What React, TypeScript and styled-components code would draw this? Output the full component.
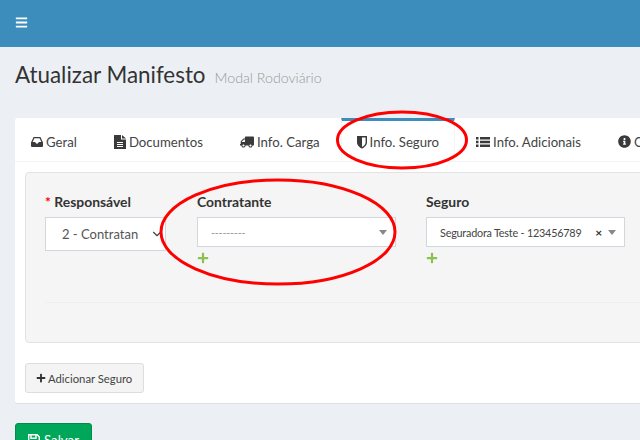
import React, { FC } from 'react'
import styled, { createGlobalStyle } from 'styled-components'
import { FaBars, FaInfoCircle, FaPlus, FaTruck } from 'react-icons/fa'
import { LuChevronDown } from 'react-icons/lu'

const GlobalStyle = createGlobalStyle`
  html, body {
    margin: 0;
    height: 440px;
    overflow: hidden;
    background: #ecf0f5;
  }
  body {
    color: #333;
    font-family: "Lato", "Liberation Sans", sans-serif;
    font-size: 14px;
  }
  * { box-sizing: border-box; }
`

const Page = styled.div`
  position: relative;
  width: 640px;
  height: 440px;
  overflow: hidden;
`

const Header = styled.header`
  align-items: center;
  background: #3c8dbc;
  color: #fff;
  display: flex;
  height: 47px;
  padding: 0 0 3px 15px;
`

const Content = styled.main`
  padding: 0 15px;
  width: 900px;
`

const Title = styled.h1`
  align-items: baseline;
  color: #333;
  display: flex;
  font-size: 22.4px;
  font-weight: 400;
  gap: 9px;
  height: 71px;
  line-height: 26px;
  margin: 0;
  padding-top: 15px;

  small {
    color: #999;
    font-size: 14.2px;
    font-weight: 300;
  }
`

const Box = styled.section`
  background: #fff;
  border-bottom: 1px solid #dde1e6;
  border-radius: 3px;
  height: 286px;
`

const Tabs = styled.ul`
  border-bottom: 1px solid #f4f4f4;
  display: flex;
  gap: 5px;
  height: 44px;
  list-style: none;
  margin: 0;
  padding: 0;
`

const Tab = styled.li<{ $active?: boolean }>`
  align-items: center;
  border-top: 3px solid ${p => (p.$active ? '#3c8dbc' : 'transparent')};
  border-left: 1px solid ${p => (p.$active ? '#f4f4f4' : 'transparent')};
  border-right: 1px solid ${p => (p.$active ? '#f4f4f4' : 'transparent')};
  color: #444;
  display: flex;
  font-size: 13.2px;
  gap: 3px;
  height: 44px;
  padding: 0 15px;
  white-space: nowrap;

  svg {
    color: #3a3a3a;
    flex: none;
  }
`

const TruckIcon = styled(FaTruck)`
  font-size: 14px;
  transform: scaleX(-1);
`

const TabPane = styled.div`
  padding: 10px;
`

const Well = styled.div`
  background: #f5f5f5;
  border: 1px solid #e3e3e3;
  border-radius: 4px;
  height: 171px;
  padding: 19px;
`

const Row = styled.div`
  display: flex;
`

const Field = styled.div<{ $width: number; $gap: number }>`
  margin-right: ${p => p.$gap}px;
  width: ${p => p.$width}px;
`

const Label = styled.label`
  color: #333;
  display: block;
  font-size: 13.9px;
  font-weight: 700;
  height: 25px;
  line-height: 20px;

  span {
    color: #f00;
  }
`

const NativeSelect = styled.div`
  align-items: center;
  background: #fff;
  border: 1px solid #d2d6de;
  color: #555;
  display: flex;
  font-size: 13px;
  height: 34px;
  overflow: hidden;
  padding-left: 16px;
  position: relative;
  white-space: nowrap;

  svg {
    background: #fff;
    color: #444;
    font-size: 14px;
    position: absolute;
    right: 1px;
  }
`

const Select2 = styled.div`
  align-items: center;
  background: #fff;
  border: 1px solid #d2d6de;
  color: #444;
  display: flex;
  font-size: 10.8px;
  height: 30px;
  letter-spacing: -0.2px;
  padding: 0 13px 0 13px;
`

const Selected = styled.span`
  flex: 1;
  white-space: nowrap;
`

const Placeholder = styled(Selected)`
  color: #999;
`

const Clear = styled.span`
  color: #333;
  font-size: 12px;
  font-weight: 700;
  margin-right: 6px;
`

const Arrow = styled.span`
  border-left: 4.5px solid transparent;
  border-right: 4.5px solid transparent;
  border-top: 5px solid #888;
  flex: none;
  margin-right: -5px;
`

const AddLink = styled.a`
  color: #8cc152;
  display: block;
  font-size: 12px;
  height: 12px;
  line-height: 12px;
  margin-top: 5px;
`

const Divider = styled.hr`
  border: 0;
  border-top: 1px solid #eee;
  margin: 38px 0 0;
`

const Button = styled.button`
  align-items: center;
  background: #f4f4f4;
  border: 1px solid #ddd;
  border-radius: 3px;
  color: #444;
  display: flex;
  font-family: inherit;
  font-size: 11.3px;
  gap: 2px;
  height: 30px;
  margin-top: 20px;
  padding: 0 10px;
  white-space: nowrap;
  width: 119px;

  svg {
    color: #333;
    font-size: 10px;
    flex: none;
  }
`

const SaveButton = styled.button`
  align-items: center;
  background: #00a65a;
  border: 1px solid #008d4c;
  border-radius: 3px;
  color: #fff;
  display: flex;
  font-family: inherit;
  font-size: 13.3px;
  gap: 4px;
  height: 34px;
  margin-top: 19px;
  padding: 0 12px;
  width: 77px;
`

const Annotations = styled.svg`
  left: 0;
  pointer-events: none;
  position: absolute;
  top: 0;
`

const InboxIcon: FC = () => (
  <svg width="12" height="14" viewBox="0 0 12 14" fill="currentColor">
    <path d="M2.6 2h6.8L12 7.4V11a1 1 0 0 1-1 1H1a1 1 0 0 1-1-1V7.4zM3.4 3.2 1.6 7h2.6l.8 1.4h2L7.8 7h2.6L8.6 3.2z" fillRule="evenodd" />
  </svg>
)

const FileIcon: FC = () => (
  <svg width="12" height="14" viewBox="0 0 12 14" fill="currentColor">
    <path
      fillRule="evenodd"
      d="M0 .5A.5.5 0 0 1 .5 0H7v4.5h5v9a.5.5 0 0 1-.5.5H.5a.5.5 0 0 1-.5-.5zM3 7v1h6V7zm0 2v1h6V9zm0 2v1h6v-1z"
    />
    <path d="M8 0l4 3.5H8z" />
  </svg>
)

const ShieldIcon: FC = () => (
  <svg width="10" height="14" viewBox="0 0 10 14" fill="currentColor">
    <path
      fillRule="evenodd"
      d="M0 1h10v6.5C10 10.5 7 12.6 5 13.6 3 12.6 0 10.5 0 7.5zM5 2.4v9.6c1.6-.9 3.6-2.5 3.6-4.5V2.4z"
    />
  </svg>
)

const ListIcon: FC = () => (
  <svg width="14" height="14" viewBox="0 0 14 14" fill="currentColor">
    <path d="M0 2h2.5v2.4H0zM4 2h10v2.4H4zM0 5.8h2.5v2.4H0zM4 5.8h10v2.4H4zM0 9.6h2.5V12H0zM4 9.6h10V12H4z" />
  </svg>
)

const SaveIcon: FC = () => (
  <svg width="12" height="12" viewBox="0 0 12 12" fill="none" stroke="currentColor" strokeWidth="1.4">
    <path d="M.7.7h8.4l2.2 2.2v8.4H.7z" />
    <path d="M3 .7v3.6h5V.7M2.8 11.3V7h6.4v4.3" />
  </svg>
)

const App: FC = () => (
  <Page>
    <GlobalStyle />
    <Header>
      <FaBars size={13} />
    </Header>
    <Content>
      <Title>
        Atualizar Manifesto <small>Modal Rodoviário</small>
      </Title>
      <Box>
        <Tabs>
          <Tab><InboxIcon />Geral</Tab>
          <Tab><FileIcon />Documentos</Tab>
          <Tab><TruckIcon />Info. Carga</Tab>
          <Tab $active><ShieldIcon />Info. Seguro</Tab>
          <Tab><ListIcon />Info. Adicionais</Tab>
          <Tab><FaInfoCircle size={13} />C</Tab>
        </Tabs>
        <TabPane>
          <Well>
            <Row>
              <Field $width={121} $gap={31}>
                <Label><span>*</span> Responsável</Label>
                <NativeSelect>
                  2 - Contratan
                  <LuChevronDown />
                </NativeSelect>
              </Field>
              <Field $width={199} $gap={30}>
                <Label>Contratante</Label>
                <Select2>
                  <Placeholder>---------</Placeholder>
                  <Arrow />
                </Select2>
                <AddLink><FaPlus /></AddLink>
              </Field>
              <Field $width={199} $gap={0}>
                <Label>Seguro</Label>
                <Select2>
                  <Selected>Seguradora Teste - 123456789</Selected>
                  <Clear>×</Clear>
                  <Arrow />
                </Select2>
                <AddLink><FaPlus /></AddLink>
              </Field>
            </Row>
            <Divider />
          </Well>
          <Button><FaPlus />Adicionar Seguro</Button>
        </TabPane>
      </Box>
      <SaveButton><SaveIcon />Salvar</SaveButton>
    </Content>
    <Annotations width="640" height="440" viewBox="0 0 640 440">
      <ellipse cx="402" cy="140" rx="64.5" ry="28" fill="none" stroke="#f00" strokeWidth="3" />
      <ellipse cx="278" cy="232" rx="117" ry="52" fill="none" stroke="#f00" strokeWidth="3" />
    </Annotations>
  </Page>
)

export default App
